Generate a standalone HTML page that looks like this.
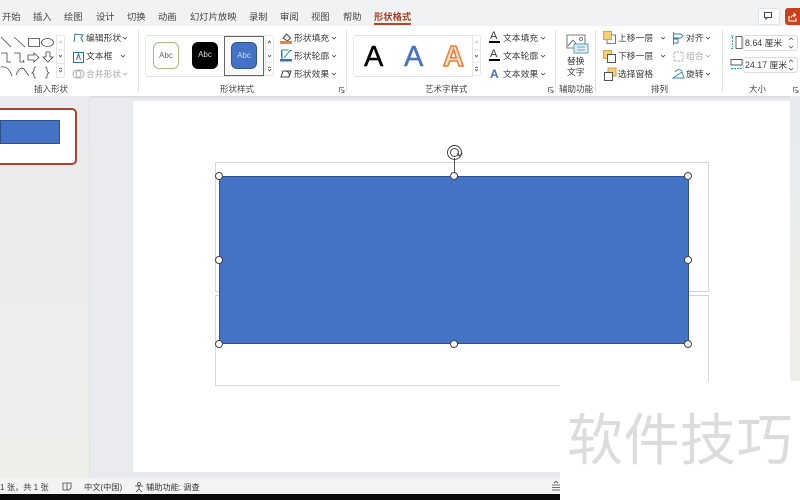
<!DOCTYPE html>
<html><head><meta charset="utf-8"><style>
html,body{margin:0;padding:0}
body{width:800px;height:500px;overflow:hidden;position:relative;background:#e9ebee;font-family:"Liberation Sans","Noto Sans CJK SC",sans-serif;color:#333}
div{position:absolute}
.t{position:absolute;font-size:8.8px;line-height:12px;white-space:nowrap;color:#3a3a3a}
.c{position:absolute;white-space:nowrap}
.tab{position:absolute;top:10.500px;font-size:9.300px;line-height:13px;white-space:nowrap;color:#444}
.g{position:absolute;top:83px;font-size:8.500px;line-height:12px;white-space:nowrap;color:#444}
.sep{position:absolute;top:30px;width:1px;height:62px;background:#e2e3e5}
.h{position:absolute;width:6px;height:6px;border:1px solid #444;border-radius:50%;background:#fff}
svg{position:absolute;overflow:visible}
.abc{position:absolute;top:42px;box-sizing:border-box;width:26px;height:27px;border-radius:6px;font-size:8px;line-height:25px;text-align:center}
.sb{position:absolute;width:9px;box-sizing:border-box;border:1px solid #e6e6e6;background:#fff}
.a{position:absolute;top:41px;font-size:29px;line-height:32px;white-space:nowrap}
</style></head><body>
<div style="left:0;top:0;width:800px;height:26px;background:#f1f2f4"></div>
<div style="left:0;top:26px;width:800px;height:70px;background:#fff;box-shadow:0 1px 2px #d5d6d8"></div>

<span class="tab" style="left:2px">开始</span><span class="tab" style="left:33px">插入</span><span class="tab" style="left:64px">绘图</span><span class="tab" style="left:96px">设计</span><span class="tab" style="left:127px">切换</span><span class="tab" style="left:158px">动画</span><span class="tab" style="left:190px">幻灯片放映</span><span class="tab" style="left:249px">录制</span><span class="tab" style="left:280px">审阅</span><span class="tab" style="left:311px">视图</span><span class="tab" style="left:343px">帮助</span>
<span class="tab" style="left:374px;font-weight:bold;color:#a83c22">形状格式</span>
<div style="left:374px;top:23px;width:37px;height:2px;background:#b5482c"></div>

<div style="left:758px;top:8px;width:20px;height:15px;background:#fff;border:1px solid #e3e3e3;border-radius:3px"></div>
<svg style="left:763px;top:11px" width="11" height="10" fill="none" stroke="#444"><path d="M1.500 1.500h7v5h-4l-1.500 1.500v-1.500h-1.500z"/></svg>
<div style="left:785px;top:8px;width:15px;height:17px;background:#c8431c;border-radius:3px 0 0 3px"></div>
<svg style="left:788px;top:12px" width="10" height="10" fill="none" stroke="#fff"><path d="M1 4v5h7V6M3 6c0-2 2-3 4-3M5.500 1l2 2-2 2"/></svg>

<!-- shape gallery -->
<svg style="left:0;top:34px" width="54" height="46" fill="none" stroke="#444" stroke-width=".8">
<path d="M1 3l10 10M14 3l11 10M28.500 4.500h11v8h-11z"/><ellipse cx="47.500" cy="8.500" rx="6" ry="4"/>
<path d="M1 19h6v9h4M14 19h6v9h4l-1-2M28 21h6v-2l5 4.500-5 4.500v-2h-6zM46 18h4v5h3l-5 5-5-5h3z"/>
<path d="M0 33c6-1 9 3 11 9M15 41c3-7 6-8 8-6l5 7M35 33c-2 0-2 1-2 3s-1 2-2 3c1 0 2 1 2 3s0 2 2 2M44 33c2 0 2 1 2 3s1 2 2 3c-1 0-2 1-2 3s0 2-2 2" transform="translate(1 0)"/></svg>
<div class="sb" style="left:56px;top:35px;height:15px;border-radius:0 3px 0 0"></div><div class="sb" style="left:56px;top:49px;height:15px"></div><div class="sb" style="left:56px;top:63px;height:15px;border-radius:0 0 3px 0"></div>
<svg style="left:56px;top:35px" width="9" height="43" fill="none" stroke="#555" stroke-width=".8"><path d="M3 8l1.500-2 1.500 2" stroke="#bbb"/><path d="M3 20l1.500 2 1.500-2M3 33.500h3M3 35l1.500 2 1.500-2"/></svg>
<svg style="left:72px;top:31px" width="12" height="50" fill="none" stroke="#2f6f9f"><path d="M2 11l1-8 8 1-2 3 2 4"/><path d="M1.500 21.500h10v10h-10zM4.500 29l2-6 2 6"/><circle cx="5" cy="43" r="4" stroke="#aaa"/><circle cx="8" cy="43" r="4" stroke="#aaa"/></svg>
<span class="t" style="left:86px;top:32px">编辑形状</span><span class="t" style="left:86px;top:50px">文本框</span><span class="t" style="left:86px;top:68px;color:#aaa">合并形状</span>
<svg style="left:122px;top:36px" width="8" height="5" fill="none" stroke="#444" stroke-width=".8"><path d="M1 1l2 2 2-2"/></svg>
<svg style="left:120px;top:54px" width="8" height="5" fill="none" stroke="#444" stroke-width=".8"><path d="M1 1l2 2 2-2"/></svg>
<svg style="left:122px;top:72px" width="8" height="5" fill="none" stroke="#aaa" stroke-width=".8"><path d="M1 1l2 2 2-2"/></svg>
<span class="g" style="left:34px">插入形状</span>
<div class="sep" style="left:138px"></div>

<!-- shape styles -->
<div style="left:145px;top:35px;width:119px;height:40px;border:1px solid #e5e5e5;border-radius:4px 0 0 4px"></div>
<div style="left:224px;top:36px;width:38px;height:38px;border:1px solid #666;background:#fafafa"></div>
<div class="abc" style="left:153px;border:1px solid #a4bb84;background:#fff;color:#666">Abc</div>
<div class="abc" style="left:192px;background:#000;color:#ddd">Abc</div>
<div class="abc" style="left:231px;background:#4472c4;color:#cfd9ee;border:1px solid #2f528f">Abc</div>
<div class="sb" style="left:265px;top:35px;height:15px;border-radius:0 3px 0 0"></div><div class="sb" style="left:265px;top:49px;height:14px"></div><div class="sb" style="left:265px;top:62px;height:14px;border-radius:0 0 3px 0"></div>
<svg style="left:265px;top:35px" width="9" height="41" fill="none" stroke="#555" stroke-width=".8"><path d="M3 8l1.500-2 1.500 2"/><path d="M3 20l1.500 2 1.500-2M3 32.500h3M3 34l1.500 2 1.500-2"/></svg>
<svg style="left:280px;top:31px" width="13" height="50" fill="none" stroke="#444"><path d="M3 7l3.500-4 4 4-3 3z"/><rect x="0" y="10" width="12" height="3" fill="#e8833a" stroke="none"/><path d="M4 27l6-7.500h2M2 20v8" stroke="#2f7fa8"/><path d="M1.500 19h7M1.500 19v8" stroke="#2f7fa8"/><rect x="0" y="28" width="12" height="2.500" fill="#3a6fb5" stroke="none"/><path d="M1 46l2-6h8l-2 6zM5 40c3 0 5 2 4 6" /></svg>
<span class="t" style="left:294px;top:32px">形状填充</span><span class="t" style="left:294px;top:50px">形状轮廓</span><span class="t" style="left:294px;top:68px">形状效果</span>
<svg style="left:331px;top:36px" width="8" height="5" fill="none" stroke="#444" stroke-width=".8"><path d="M1 1l2 2 2-2"/></svg>
<svg style="left:331px;top:54px" width="8" height="5" fill="none" stroke="#444" stroke-width=".8"><path d="M1 1l2 2 2-2"/></svg>
<svg style="left:331px;top:72px" width="8" height="5" fill="none" stroke="#444" stroke-width=".8"><path d="M1 1l2 2 2-2"/></svg>
<span class="g" style="left:220px">形状样式</span>
<svg style="left:339px;top:87px" width="6" height="6" fill="none" stroke="#666" stroke-width=".8"><path d="M.5 5V.5H5M2 2l3 3M5 3v2.500H2.500"/></svg>
<div class="sep" style="left:346px"></div>

<!-- wordart -->
<div style="left:353px;top:35px;width:118px;height:40px;border:1px solid #e5e5e5;border-radius:4px 0 0 4px"></div>
<span class="a" style="left:364px;color:#000;-webkit-text-stroke:.4px #000">A</span>
<span class="a" style="left:404px;color:#4472c4;-webkit-text-stroke:.4px #4472c4">A</span>
<span class="a" style="left:443px;color:#fbe3d3;-webkit-text-stroke:1.500px #ed7d31;font-weight:bold">A</span>
<div class="sb" style="left:472px;top:35px;height:15px;border-radius:0 3px 0 0"></div><div class="sb" style="left:472px;top:49px;height:14px"></div><div class="sb" style="left:472px;top:62px;height:14px;border-radius:0 0 3px 0"></div>
<svg style="left:472px;top:35px" width="9" height="41" fill="none" stroke="#555" stroke-width=".8"><path d="M3 8l1.500-2 1.500 2" stroke="#bbb"/><path d="M3 20l1.500 2 1.500-2M3 32.500h3M3 34l1.500 2 1.500-2"/></svg>
<span class="c" style="left:490px;top:31px;font-size:11px;line-height:11px">A</span><div style="left:489px;top:41px;width:11px;height:2px;background:#000"></div>
<span class="c" style="left:490px;top:49px;font-size:11px;line-height:11px">A</span><div style="left:489px;top:59px;width:11px;height:2px;background:#000"></div>
<span class="c" style="left:490px;top:68px;font-size:12px;line-height:12px;font-weight:bold;color:#4472c4">A</span>
<span class="t" style="left:503px;top:32px">文本填充</span><span class="t" style="left:503px;top:50px">文本轮廓</span><span class="t" style="left:503px;top:68px">文本效果</span>
<svg style="left:540px;top:36px" width="8" height="5" fill="none" stroke="#444" stroke-width=".8"><path d="M1 1l2 2 2-2"/></svg>
<svg style="left:540px;top:54px" width="8" height="5" fill="none" stroke="#444" stroke-width=".8"><path d="M1 1l2 2 2-2"/></svg>
<svg style="left:540px;top:72px" width="8" height="5" fill="none" stroke="#444" stroke-width=".8"><path d="M1 1l2 2 2-2"/></svg>
<span class="g" style="left:425px">艺术字样式</span>
<svg style="left:548px;top:87px" width="6" height="6" fill="none" stroke="#666" stroke-width=".8"><path d="M.5 5V.5H5M2 2l3 3M5 3v2.500H2.500"/></svg>
<div class="sep" style="left:555px"></div>

<!-- alt text -->
<svg style="left:566px;top:34px" width="24" height="20" fill="none" stroke="#555" stroke-width=".8"><path d="M1 1h18v13H1z"/><path d="M2 12l5-6 5 6"/><circle cx="15" cy="5" r="1.500"/><rect x="8" y="10" width="14" height="9" fill="#e6f0f7" stroke="#3a87b5"/><path d="M11 13h8M11 16h8" stroke="#3a87b5"/></svg>
<span class="t" style="left:567px;top:54.500px">替换</span><span class="t" style="left:567px;top:65.500px">文字</span>
<span class="g" style="left:559px">辅助功能</span>
<div class="sep" style="left:595px"></div>

<!-- arrange -->
<svg style="left:603px;top:31px" width="15" height="50" fill="none" stroke="#555"><rect x=".5" y=".5" width="8" height="8" fill="#f7cd75" stroke="#d9a441"/><path d="M9 4h3.500v8.500H4V9" stroke-width=".8"/><rect x=".5" y="19.500" width="8" height="8" fill="#f7cd75" stroke="#d9a441"/><rect x="4.500" y="23.500" width="8" height="8" fill="#fff"/><rect x="5" y="37" width="8" height="8" fill="#f7cd75" stroke="#d9a441"/><rect x="1.500" y="41.500" width="8" height="8" fill="#fff"/></svg>
<span class="t" style="left:618px;top:32px">上移一层</span><span class="t" style="left:618px;top:50px">下移一层</span><span class="t" style="left:618px;top:68px">选择窗格</span>
<svg style="left:660px;top:36px" width="8" height="5" fill="none" stroke="#444" stroke-width=".8"><path d="M1 1l2 2 2-2"/></svg>
<svg style="left:660px;top:54px" width="8" height="5" fill="none" stroke="#444" stroke-width=".8"><path d="M1 1l2 2 2-2"/></svg>
<svg style="left:672px;top:31px" width="13" height="50" fill="none" stroke="#555" stroke-width=".9"><path d="M1.500 1v13M2 3h7l2 2-2 2H2M2 8h4v4H2" stroke="#34789e"/><path d="M2 21h9v9H2z" stroke="#aaa" stroke-dasharray="2 1"/><path d="M1 47l9-6 2 6zM3 41c2-3 5-3 7-1" stroke="#3a87b5"/></svg>
<span class="t" style="left:686px;top:32px">对齐</span><span class="t" style="left:686px;top:50px;color:#aaa">组合</span><span class="t" style="left:686px;top:68px">旋转</span>
<svg style="left:705px;top:36px" width="8" height="5" fill="none" stroke="#444" stroke-width=".8"><path d="M1 1l2 2 2-2"/></svg>
<svg style="left:705px;top:54px" width="8" height="5" fill="none" stroke="#aaa" stroke-width=".8"><path d="M1 1l2 2 2-2"/></svg>
<svg style="left:705px;top:72px" width="8" height="5" fill="none" stroke="#444" stroke-width=".8"><path d="M1 1l2 2 2-2"/></svg>
<span class="g" style="left:651px">排列</span>
<div class="sep" style="left:722px"></div>

<!-- size -->
<svg style="left:730px;top:35px" width="13" height="38" fill="none" stroke="#555" stroke-width=".9"><path d="M1 1h3M1 13.500h3M2.500 2v10" stroke="#2f8fc0" stroke-dasharray="2 1"/><rect x="6" y="1.500" width="6" height="12"/><path d="M1 24.500h11v5.500H1z"/><path d="M1 33.500h11" stroke="#2f8fc0" stroke-dasharray="2 1"/></svg>
<div style="left:743px;top:35px;width:53px;height:14px;border:1px solid #ddd;border-radius:3px"></div>
<div style="left:743px;top:57px;width:53px;height:14px;border:1px solid #ddd;border-radius:3px"></div>
<span class="t" style="left:745px;top:37px;font-size:8.800px">8.64 厘米</span><span class="t" style="left:745px;top:59px;font-size:8.800px">24.17 厘米</span>
<svg style="left:788px;top:37px" width="6" height="34" fill="none" stroke="#555" stroke-width=".8"><path d="M1 3l2-2 2 2M1 9l2 2 2-2M1 25l2-2 2 2M1 31l2 2 2-2"/></svg>
<span class="g" style="left:749px">大小</span>
<svg style="left:793px;top:87px" width="6" height="6" fill="none" stroke="#666" stroke-width=".8"><path d="M.5 5V.5H5M2 2l3 3M5 3v2.500H2.500"/></svg>

<!-- thumb panel -->
<div style="left:0;top:96px;width:89px;height:382px;background:linear-gradient(#e9ebee,#eeeeeb);border-right:1px solid #e0e2e5"></div>
<div style="left:-6px;top:108px;width:79px;height:53px;background:#fff;border:2px solid #a9452f;border-radius:5px"></div>
<div style="left:0;top:120px;width:60px;height:24px;background:#4472c4;border:1px solid #2f528f;box-sizing:border-box"></div>

<!-- slide -->
<div style="left:133px;top:101px;width:657px;height:371px;background:#fff"></div>
<div style="left:215px;top:162px;width:492px;height:128px;border:1px solid #d5d5d5"></div>
<div style="left:215px;top:295px;width:492px;height:89px;border:1px solid #d5d5d5"></div>
<div style="left:219px;top:176px;width:470px;height:168px;background:#4472c4;border:1px solid #2f528f;box-sizing:border-box"></div>
<div style="left:454px;top:158px;width:1px;height:18px;background:#555"></div>
<svg style="left:446px;top:144px" width="20" height="17" fill="none" stroke="#444"><circle cx="8.500" cy="8.500" r="7"/><circle cx="8.500" cy="8.500" r="4"/><path d="M11 9.500l2.500 2.500 3-3" stroke-width="1.200"/></svg>
<div class="h" style="left:215px;top:172px"></div><div class="h" style="left:450px;top:172px"></div><div class="h" style="left:684px;top:172px"></div>
<div class="h" style="left:215px;top:256px"></div><div class="h" style="left:684px;top:256px"></div>
<div class="h" style="left:215px;top:340px"></div><div class="h" style="left:450px;top:340px"></div><div class="h" style="left:684px;top:340px"></div>

<!-- status -->
<div style="left:0;top:478px;width:800px;height:16px;background:#f2f3f5"></div>
<div style="left:0;top:494px;width:800px;height:6px;background:#0a0a0a"></div>
<span class="t" style="left:0;top:481.500px;font-size:8.200px">1 张，共 1 张</span>
<svg style="left:62px;top:482px" width="10" height="10" fill="none" stroke="#444" stroke-width=".8"><path d="M1 1h4v7H1zM5 1h4v5l-2 2H5z"/></svg>
<span class="t" style="left:84px;top:481.500px;font-size:8.200px">中文(中国)</span>
<svg style="left:134px;top:482px" width="10" height="10" fill="none" stroke="#444" stroke-width=".8"><circle cx="5" cy="2" r="1.500"/><path d="M1 4h8M5 4v3l-3 3M5 7l3 3"/></svg>
<span class="t" style="left:146px;top:481.500px;font-size:8.200px">辅助功能: 调查</span>

<!-- right strip + watermark -->
<div style="left:790px;top:96px;width:10px;height:285px;background:linear-gradient(#e8eaed,#efeeea)"></div>
<div style="left:560px;top:381px;width:240px;height:119px;background:#fff"></div>
<span class="c" style="left:567px;top:411px;font-size:56px;line-height:60px;color:#dcdcdc;letter-spacing:.5px">软件技巧</span>
<svg style="left:552px;top:481px" width="8" height="12" fill="none" stroke="#444" stroke-width=".8"><path d="M0 4h8M0 6.500h8M0 9h8M2 2l2-1.500L6 2"/></svg>
</body></html>
